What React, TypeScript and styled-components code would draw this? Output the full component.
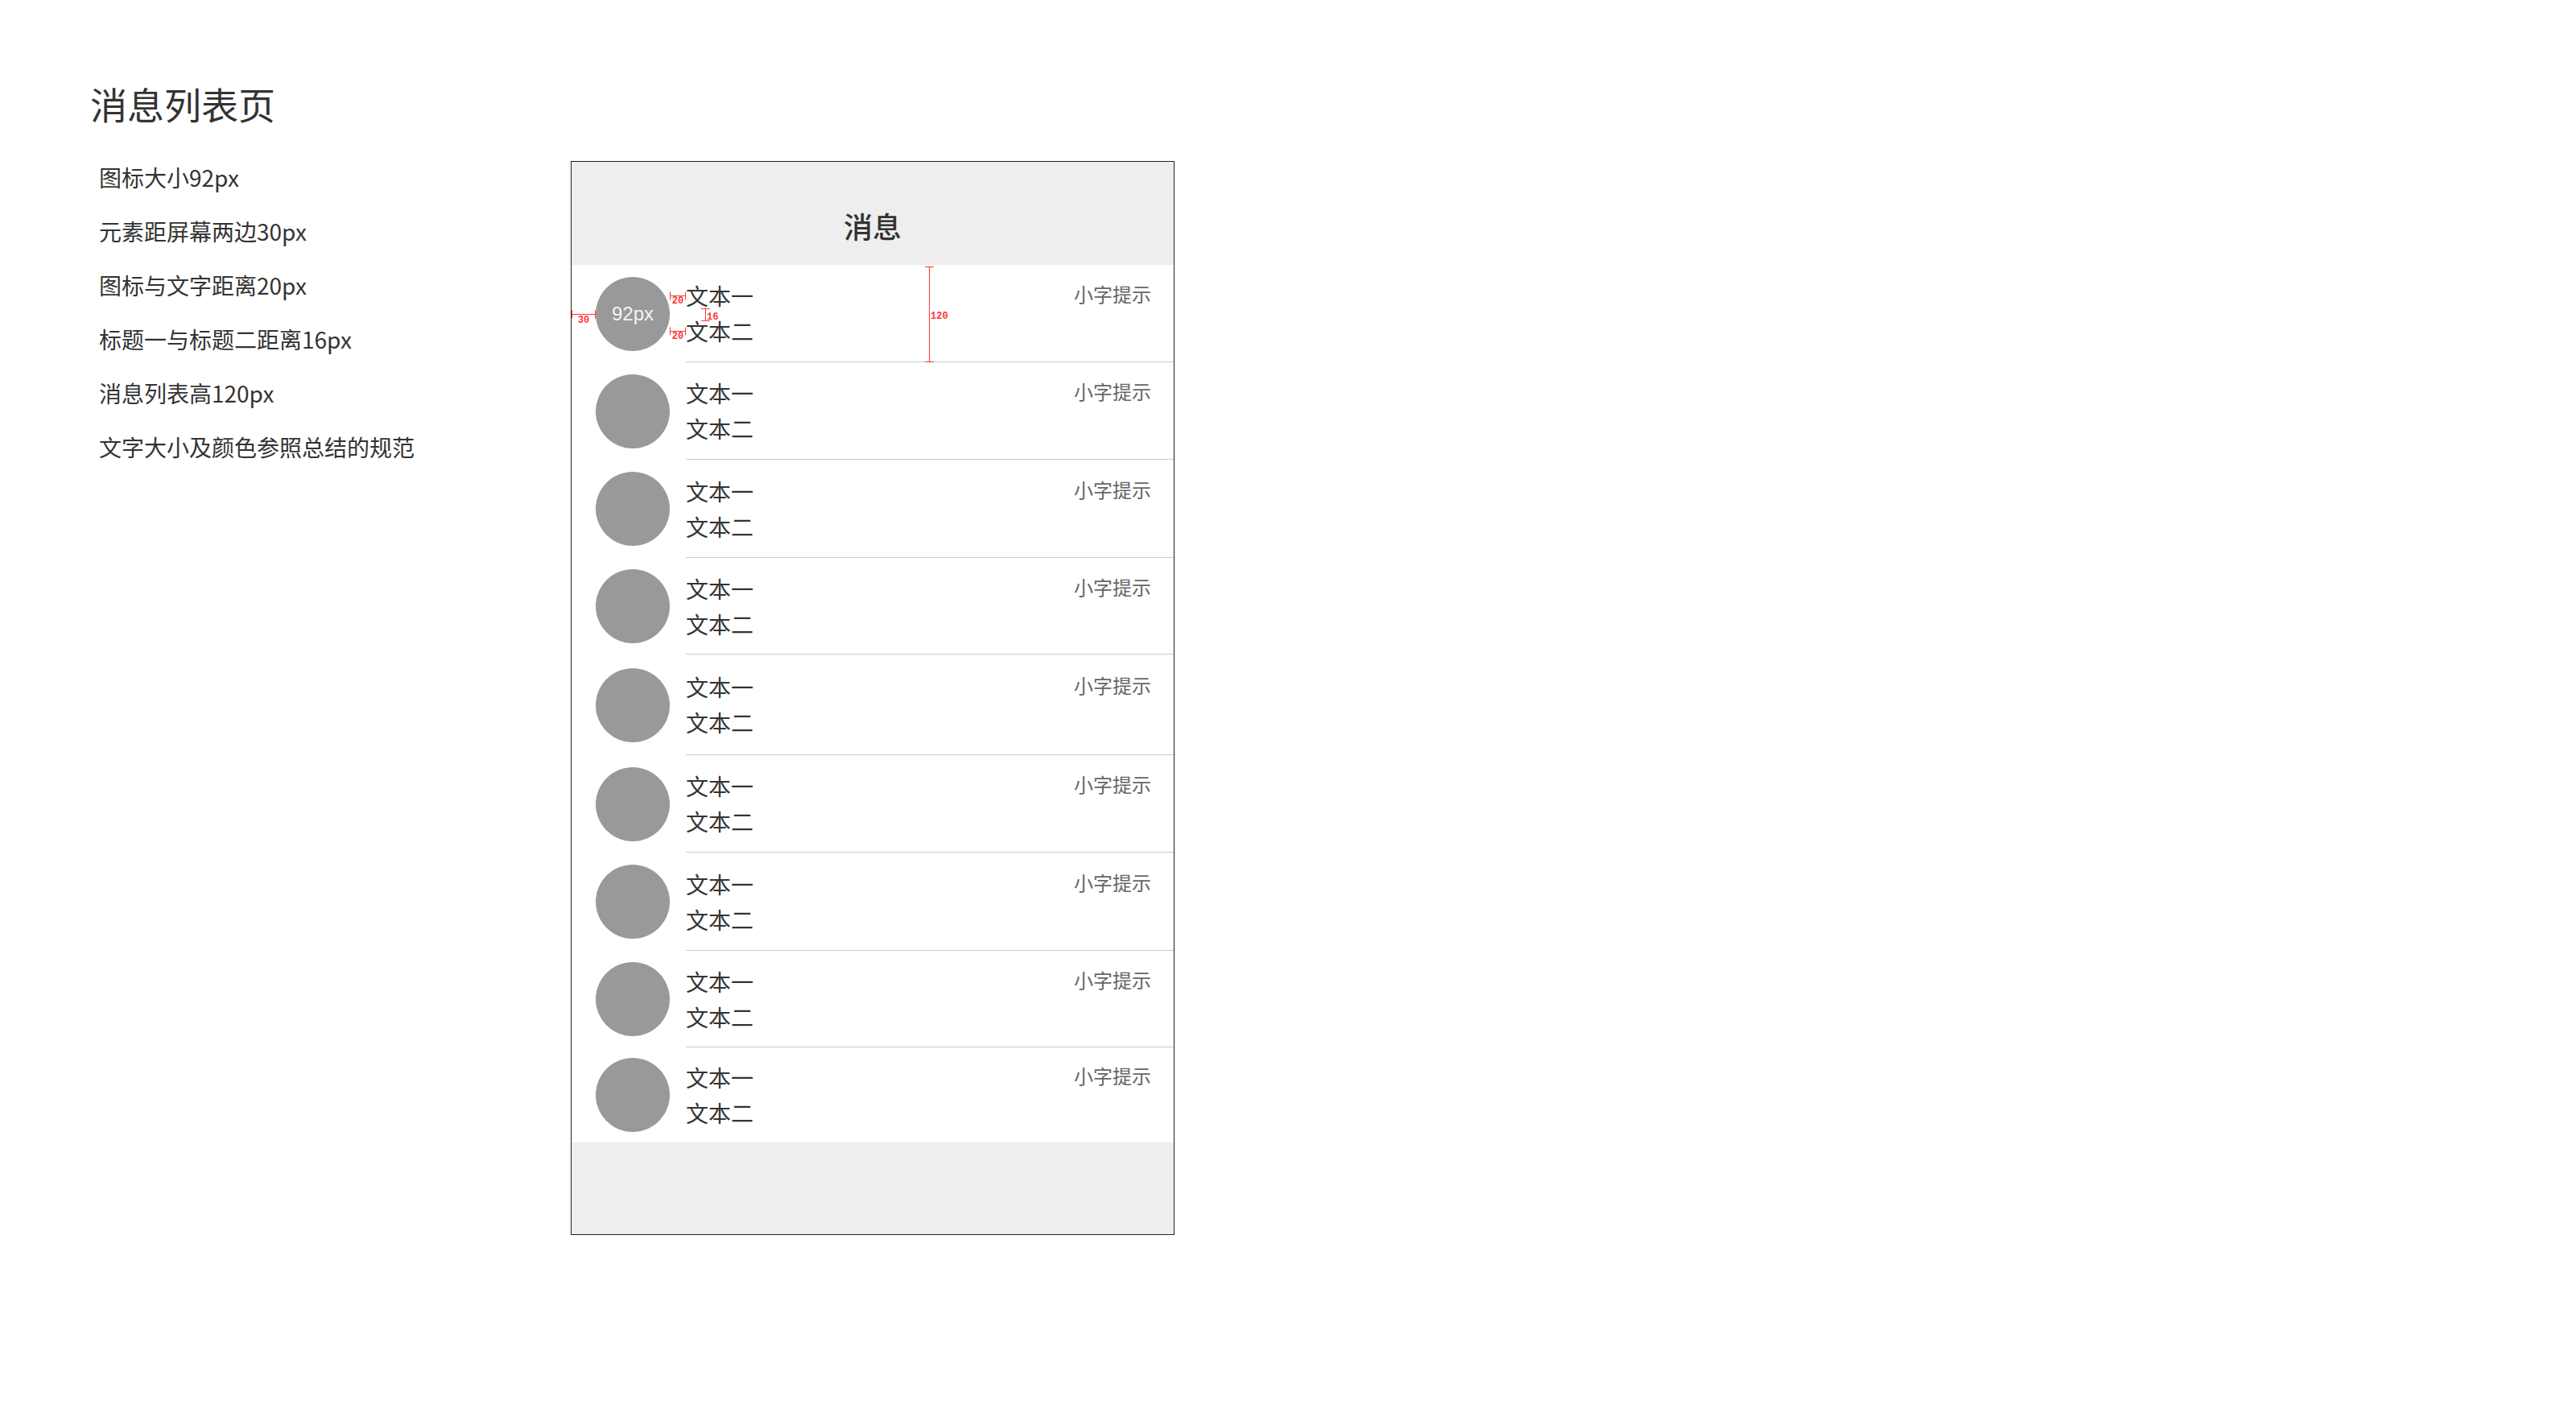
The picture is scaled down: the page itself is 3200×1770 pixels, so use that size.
import React from "react";
import styled, { createGlobalStyle } from "styled-components";

const GlobalStyle = createGlobalStyle`
  html, body {
    margin: 0;
    padding: 0;
    background: #ffffff;
  }
  * {
    box-sizing: border-box;
  }
`;

const CJK = `"Noto Sans CJK SC", "Liberation Sans", sans-serif`;

const Page = styled.div`
  display: flex;
  align-items: flex-start;
  padding: 100px 0 0 112px;
  min-height: 1770px;
  font-family: ${CJK};
  color: #333333;
`;

const Notes = styled.section`
  width: 597px;
  flex-shrink: 0;
  display: flex;
  flex-direction: column;
`;

const PageTitle = styled.h1`
  margin: 0;
  font-size: 46px;
  line-height: 56px;
  font-weight: 400;
  color: #333333;
`;

const NoteList = styled.ul`
  list-style: none;
  margin: 31px 0 0;
  padding: 0 0 0 11px;
`;

const NoteItem = styled.li`
  height: 67px;
  line-height: 67px;
  font-size: 28px;
  color: #333333;
  white-space: nowrap;
`;

const Phone = styled.div`
  margin-top: 100px;
  width: 750px;
  height: 1334px;
  border: 1px solid #222222;
  background: #ffffff;
  display: flex;
  flex-direction: column;
  overflow: hidden;
  flex-shrink: 0;
`;

const NavBar = styled.header`
  height: 128px;
  flex-shrink: 0;
  padding-top: 30px;
  background: #eeeeee;
  display: flex;
  align-items: center;
  justify-content: center;
`;

const NavTitle = styled.div`
  font-size: 36px;
  line-height: 36px;
  font-weight: 500;
  color: #333333;
`;

const Row = styled.div<{ $h: number }>`
  position: relative;
  height: ${(p) => p.$h}px;
  flex-shrink: 0;
  display: flex;
  align-items: center;
  padding-left: 30px;
`;

const Avatar = styled.div`
  width: 92px;
  height: 92px;
  flex-shrink: 0;
  border-radius: 50%;
  background: #999999;
  display: flex;
  align-items: center;
  justify-content: center;
  color: #f4f4f4;
  font-family: "Liberation Sans", Arial, sans-serif;
  font-size: 24px;
`;

const Body = styled.div<{ $last?: boolean }>`
  flex: 1;
  align-self: stretch;
  margin-left: 20px;
  display: flex;
  flex-direction: column;
  justify-content: center;
  border-bottom: ${(p) => (p.$last ? "none" : "1px solid #cccccc")};
`;

const TopLine = styled.div`
  display: flex;
  align-items: flex-start;
  justify-content: space-between;
  padding-right: 28px;
`;

const Primary = styled.div<{ $second?: boolean }>`
  font-size: 28px;
  line-height: 28px;
  color: #333333;
  margin-top: ${(p) => (p.$second ? "16px" : "0")};
`;

const Hint = styled.div`
  font-size: 24px;
  line-height: 24px;
  color: #666666;
`;

const Footer = styled.div`
  flex: 1;
  background: #eeeeee;
`;

const Marks = styled.svg`
  position: absolute;
  left: 0;
  top: 0;
  overflow: visible;
  pointer-events: none;
`;

const RED = "#ff3535";

const MarkLabel: React.FC<{ x: number; y: number; anchor?: "start" | "middle"; children: React.ReactNode }> = ({
  x,
  y,
  anchor = "middle",
  children,
}) => (
  <text
    x={x}
    y={y}
    textAnchor={anchor}
    fill={RED}
    fontFamily='"Liberation Mono", "DejaVu Sans Mono", monospace'
    fontWeight={700}
    fontSize={12}
  >
    {children}
  </text>
);

const HMark: React.FC<{ x1: number; x2: number; y: number; tick: number }> = ({ x1, x2, y, tick }) => (
  <g stroke={RED} strokeWidth={1}>
    <line x1={x1} y1={y} x2={x2} y2={y} />
    <line x1={x1} y1={y - tick} x2={x1} y2={y + tick} />
    <line x1={x2} y1={y - tick} x2={x2} y2={y + tick} />
  </g>
);

const VMark: React.FC<{ y1: number; y2: number; x: number; tick: number }> = ({ y1, y2, x, tick }) => (
  <g stroke={RED} strokeWidth={1}>
    <line x1={x} y1={y1} x2={x} y2={y2} />
    <line x1={x - tick} y1={y1} x2={x + tick} y2={y1} />
    <line x1={x - tick} y1={y2} x2={x + tick} y2={y2} />
  </g>
);

const Measurements: React.FC = () => (
  <Marks width={748} height={121} viewBox="0 0 748 121">
    <HMark x1={0.5} x2={29.5} y={61.5} tick={5} />
    <MarkLabel x={15} y={72}>30</MarkLabel>

    <HMark x1={122.5} x2={141.5} y={38.5} tick={5} />
    <MarkLabel x={132} y={48}>20</MarkLabel>

    <HMark x1={122.5} x2={141.5} y={82.5} tick={5} />
    <MarkLabel x={132} y={92}>20</MarkLabel>

    <VMark x={166.5} y1={54.5} y2={69.5} tick={5.5} />
    <MarkLabel x={168} y={68} anchor="start">16</MarkLabel>

    <VMark x={444.5} y1={2.5} y2={120.5} tick={5.5} />
    <MarkLabel x={446} y={67} anchor="start">120</MarkLabel>
  </Marks>
);

const notes = [
  "图标大小92px",
  "元素距屏幕两边30px",
  "图标与文字距离20px",
  "标题一与标题二距离16px",
  "消息列表高120px",
  "文字大小及颜色参照总结的规范",
];

const rowHeights = [121, 121, 122, 120, 125, 121, 122, 120, 118];

export default function App() {
  return (
    <>
      <GlobalStyle />
      <Page>
        <Notes>
          <PageTitle>消息列表页</PageTitle>
          <NoteList>
            {notes.map((n) => (
              <NoteItem key={n}>{n}</NoteItem>
            ))}
          </NoteList>
        </Notes>
        <Phone>
          <NavBar>
            <NavTitle>消息</NavTitle>
          </NavBar>
          {rowHeights.map((h, i) => {
            const last = i === rowHeights.length - 1;
            return (
              <Row key={i} $h={h}>
                <Avatar>{i === 0 ? "92px" : null}</Avatar>
                <Body $last={last}>
                  <TopLine>
                    <Primary>文本一</Primary>
                    <Hint>小字提示</Hint>
                  </TopLine>
                  <Primary $second>文本二</Primary>
                </Body>
                {i === 0 && <Measurements />}
              </Row>
            );
          })}
          <Footer />
        </Phone>
      </Page>
    </>
  );
}
